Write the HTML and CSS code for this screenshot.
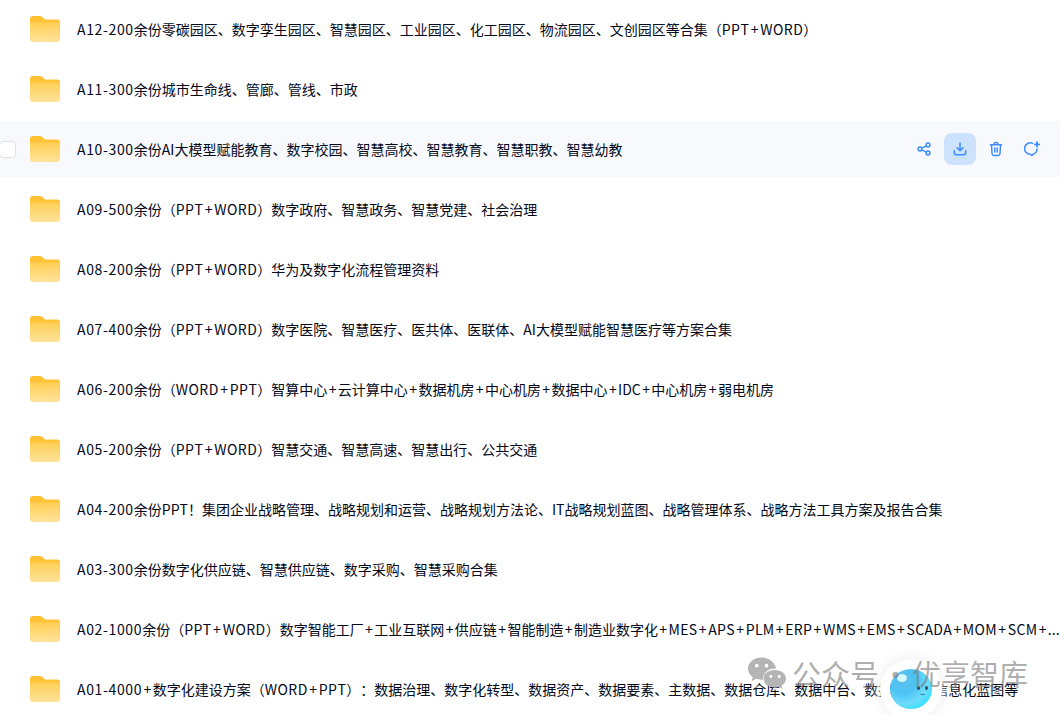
FILE: index.html
```html
<!DOCTYPE html>
<html lang="zh-CN">
<head>
  <meta charset="UTF-8">
  <title>文件列表</title>
  <link rel="stylesheet" href="styles.css">
</head>
<body>
<svg class="defs" width="0" height="0">
  <defs>
    <linearGradient id="folderBack" x1="0" y1="0" x2="0" y2="1">
      <stop offset="0" stop-color="#ffc02e"/>
      <stop offset="1" stop-color="#ffc947"/>
    </linearGradient>
    <linearGradient id="folderFront" x1="0" y1="0" x2="0" y2="1">
      <stop offset="0" stop-color="#ffcf55"/>
      <stop offset="1" stop-color="#ffe39c"/>
    </linearGradient>
    <symbol id="folder" viewBox="0 0 30 26">
      <path d="M0 3a3 3 0 0 1 3-3h6.500c1.500 0 2.500.6 3.600 1.700L15 3.500h12a3 3 0 0 1 3 3V14H0z" fill="url(#folderBack)"/>
      <path d="M0 6.500h30V23a3 3 0 0 1-3 3H3a3 3 0 0 1-3-3z" fill="url(#folderFront)"/>
    </symbol>
  </defs>
</svg>

<ul class="file-list">
  <li class="file-row">
    <svg class="folder"><use href="#folder"/></svg>
    <span class="file-name"><b class="code">A12-200</b>余份零碳园区、数字孪生园区、智慧园区、工业园区、化工园区、物流园区、文创园区等合集（<b class="word">PPT<b class="plus">+</b>WORD</b>）</span>
  </li>
  <li class="file-row">
    <svg class="folder"><use href="#folder"/></svg>
    <span class="file-name"><b class="code">A11-300</b>余份城市生命线、管廊、管线、市政</span>
  </li>
  <li class="file-row is-hover">
    <span class="check"></span>
    <svg class="folder"><use href="#folder"/></svg>
    <span class="file-name"><b class="code">A10-300</b>余份AI大模型赋能教育、数字校园、智慧高校、智慧教育、智慧职教、智慧幼教</span>
    <div class="actions">
      <span class="act">
        <svg viewBox="0 0 16 16" width="16" height="16"><circle cx="4" cy="8" r="1.900"/><circle cx="12" cy="4" r="1.900"/><circle cx="12" cy="12" r="1.900"/><path d="M5.800 7.100l4.400-2.200M5.800 8.900l4.400 2.200"/></svg>
      </span>
      <span class="act act-on">
        <svg viewBox="0 0 16 16" width="16" height="16"><path d="M8 2v7.500M5 6.700L8 9.700l3-3M2.300 9.800v1.900a2 2 0 0 0 2 2h7.400a2 2 0 0 0 2-2V9.800"/></svg>
      </span>
      <span class="act">
        <svg viewBox="0 0 16 16" width="16" height="16"><path d="M2.500 3.800h11M6 3.600V2.900A1.400 1.400 0 0 1 7.400 1.500h1.200A1.400 1.400 0 0 1 10 2.900v.7M3.500 3.800l.5 8.900a2 2 0 0 0 2 1.800h4a2 2 0 0 0 2-1.800l.5-8.900M6.800 7v4M9.200 7v4"/></svg>
      </span>
      <span class="act">
        <svg viewBox="0 0 16 16" width="16" height="16"><path d="M8.600 2.400A5.700 5.700 0 1 0 6.400 13.300l1.500 1.200 1-1.300a5.700 5.700 0 0 0 4.200-5.200"/><path class="add" d="M13 1.300v4.200M10.900 3.400h4.200"/></svg>
      </span>
    </div>
  </li>
  <li class="file-row">
    <svg class="folder"><use href="#folder"/></svg>
    <span class="file-name"><b class="code">A09-500</b>余份（<b class="word">PPT<b class="plus">+</b>WORD</b>）数字政府、智慧政务、智慧党建、社会治理</span>
  </li>
  <li class="file-row">
    <svg class="folder"><use href="#folder"/></svg>
    <span class="file-name"><b class="code">A08-200</b>余份（<b class="word">PPT<b class="plus">+</b>WORD</b>）华为及数字化流程管理资料</span>
  </li>
  <li class="file-row">
    <svg class="folder"><use href="#folder"/></svg>
    <span class="file-name"><b class="code">A07-400</b>余份（<b class="word">PPT<b class="plus">+</b>WORD</b>）数字医院、智慧医疗、医共体、医联体、AI大模型赋能智慧医疗等方案合集</span>
  </li>
  <li class="file-row">
    <svg class="folder"><use href="#folder"/></svg>
    <span class="file-name"><b class="code">A06-200</b>余份（<b class="word">WORD<b class="plus">+</b>PPT</b>）智算中心<b class="plus">+</b>云计算中心<b class="plus">+</b>数据机房<b class="plus">+</b>中心机房<b class="plus">+</b>数据中心<b class="plus">+</b>IDC<b class="plus">+</b>中心机房<b class="plus">+</b>弱电机房</span>
  </li>
  <li class="file-row">
    <svg class="folder"><use href="#folder"/></svg>
    <span class="file-name"><b class="code">A05-200</b>余份（<b class="word">PPT<b class="plus">+</b>WORD</b>）智慧交通、智慧高速、智慧出行、公共交通</span>
  </li>
  <li class="file-row">
    <svg class="folder"><use href="#folder"/></svg>
    <span class="file-name"><b class="code">A04-200</b>余份PPT！集团企业战略管理、战略规划和运营、战略规划方法论、IT战略规划蓝图、战略管理体系、战略方法工具方案及报告合集</span>
  </li>
  <li class="file-row">
    <svg class="folder"><use href="#folder"/></svg>
    <span class="file-name"><b class="code">A03-300</b>余份数字化供应链、智慧供应链、数字采购、智慧采购合集</span>
  </li>
  <li class="file-row">
    <svg class="folder"><use href="#folder"/></svg>
    <span class="file-name"><b class="code">A02-1000</b>余份（<b class="word">PPT<b class="plus">+</b>WORD</b>）数字智能工厂<b class="plus">+</b>工业互联网<b class="plus">+</b>供应链<b class="plus">+</b>智能制造<b class="plus">+</b>制造业数字化<b class="plus">+</b><b class="caps">MES<b class="plus">+</b>APS<b class="plus">+</b>PLM<b class="plus">+</b>ERP<b class="plus">+</b>WMS<b class="plus">+</b>EMS<b class="plus">+</b>SCADA<b class="plus">+</b>MOM<b class="plus">+</b>SCM</b><b class="plus">+</b>...</span>
  </li>
  <li class="file-row">
    <svg class="folder"><use href="#folder"/></svg>
    <span class="file-name"><b class="code">A01-4000</b><b class="plus">+</b>数字化建设方案（<b class="word">WORD<b class="plus">+</b>PPT</b>）：数据治理、数字化转型、数据资产、数据要素、主数据、数据仓库、数据中台、数据湖仓、信息化蓝图等</span>
  </li>
</ul>

<div class="mascot">
  <span class="shine"></span>
  <span class="eye-dot left"></span>
  <span class="eye-dot right"></span>
  <span class="smile"></span>
</div>

<!-- 水印 -->
<div class="watermark">
  <svg class="wx" viewBox="0 0 40 34" width="39" height="34">
    <path d="M15 1C7 1 1 6 1 12.500c0 3.600 2 6.800 5 9l-1.500 4 5-2.500c1.800.5 3.500.8 5.500.8h1.500C16 18 21 12.500 29 12.500h1C28.500 6 22.500 1 15 1z"/>
    <path d="M28.500 14C22 14 17 18 17 23s5 9 11.500 9c1.400 0 2.800-.2 4-.6l4 2-1.100-3.300C38 28.500 40 26 40 23c0-5-5-9-11.500-9z"/>
    <circle class="eye" cx="10" cy="9.500" r="1.900"/><circle class="eye" cx="20" cy="9.500" r="1.900"/>
    <circle class="eye" cx="24.500" cy="20.500" r="1.500"/><circle class="eye" cx="33" cy="20.500" r="1.500"/>
  </svg>
  <span class="wm-text">公众号</span>
  <span class="wm-text wm-dot">·</span>
  <span class="wm-text">优享智库</span>
</div>
</body>
</html>
```

FILE: styles.css
```css
html, body { margin: 0; padding: 0; height: 715px; overflow: hidden; background: #fff; }
body { position: relative; font-family: "Noto Sans CJK SC", "Liberation Sans", sans-serif; font-kerning: none; text-spacing-trim: space-all; }
.defs { position: absolute; }

.file-list { list-style: none; margin: 0; padding: 1px 0 0; display: flex; flex-direction: column; gap: 4px; }
.file-row { position: relative; display: flex; align-items: center; height: 56px; padding-left: 30px; }
.file-row.is-hover { background: #f7f9fc; }
.folder { width: 30px; height: 26px; flex: none; margin-right: 17px; }
.file-name { flex: 1; min-width: 0; font-size: 14px; color: #03081a; white-space: nowrap; overflow: hidden; }
.file-name b { font-weight: 400; }
.code { letter-spacing: 0.65px; }
.word { letter-spacing: 0.45px; }
.caps { letter-spacing: 0.3px; }
.plus { padding: 0 1.4px; }

.check { position: absolute; left: -1px; top: 20px; width: 15px; height: 15px; background: #fff; border: 1px solid #dfe0e6; border-radius: 4px; }

.actions { display: flex; align-items: center; gap: 4px; padding-right: 12px; flex: none; }
.act { width: 32px; height: 32px; border-radius: 8px; display: flex; align-items: center; justify-content: center; }
.act-on { background: #cce2ff; }
.act svg { fill: none; stroke: #3c8cff; stroke-width: 1.5; stroke-linecap: round; stroke-linejoin: round; }
.act svg .add { stroke-width: 1.9; }

.watermark { position: absolute; left: 747px; top: 656px; display: flex; align-items: center; }
.wx { fill: #b4b4b4; flex: none; margin-right: 6px; }
.wx .eye { fill: #fff; }
.wm-text { font-size: 29px; line-height: 34px; color: rgba(120, 120, 120, 0.6); white-space: nowrap; }
.wm-dot { width: 33px; text-align: center; }

.mascot { position: absolute; left: 890px; top: 669px; width: 42px; height: 40px; border-radius: 50%; background: radial-gradient(circle at 30% 25%, #5cbff0 0, #4cc4f4 35%, #6fdcfb 60%, #27e0ff 85%, #7cefff 100%); box-shadow: 0 0 0 10px #fff, 0 0 10px 14px rgba(236, 236, 236, 0.6); }
.shine { position: absolute; left: 7px; top: 5px; width: 10px; height: 8px; background: #d8f7ff; border-radius: 50%; }
.eye-dot { position: absolute; top: 17px; width: 3px; height: 4px; background: #2c4a66; border-radius: 50%; }
.eye-dot.left { left: 27px; }
.eye-dot.right { left: 35px; }
.smile { position: absolute; left: 30px; top: 23px; width: 5px; height: 2px; border-bottom: 1px solid #2c6a96; border-radius: 50%; }
```
